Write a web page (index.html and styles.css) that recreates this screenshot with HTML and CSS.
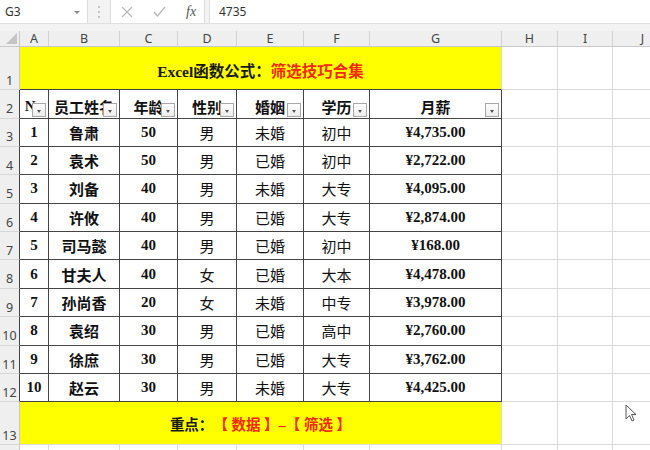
FILE: index.html
```html
<!DOCTYPE html>
<html>
<head>
  <title>Excel 筛选技巧</title>
  <link rel="stylesheet" href="styles.css">
</head>
<body>
  <div class="bar">
    <div class="namebox">G3<span class="caret"></span></div>
    <svg class="grip" width="4" height="14" viewBox="0 0 4 14">
      <circle cx="2" cy="2" r="1" fill="#b4b4b4"/>
      <circle cx="2" cy="7" r="1" fill="#b4b4b4"/>
      <circle cx="2" cy="12" r="1" fill="#b4b4b4"/>
    </svg>
    <div class="fxbox">
      <svg width="12" height="12" viewBox="0 0 12 12"><path d="M1 1 L11 11 M11 1 L1 11" stroke="#b8b8b8" stroke-width="1.2"/></svg>
      <svg width="13" height="11" viewBox="0 0 13 11"><path d="M1 6 L4.5 10 L12 1" stroke="#b8b8b8" stroke-width="1.3" fill="none"/></svg>
      <i>fx</i>
    </div>
    <div class="formula">4735</div>
  </div>

  <div class="sheet">
    <!-- column headers -->
    <div class="corner"><span></span></div>
    <div class="ch">A</div><div class="ch">B</div><div class="ch">C</div><div class="ch">D</div>
    <div class="ch">E</div><div class="ch">F</div><div class="ch">G</div><div class="ch">H</div>
    <div class="ch">I</div><div class="ch">J</div>

    <!-- row 1 -->
    <div class="rh">1</div>
    <div class="band top">Excel函数公式：<span class="red">筛选技巧合集</span></div>
    <div class="c"></div><div class="c"></div><div class="c"></div>

    <!-- row 2 -->
    <div class="rh dk">2</div>
    <div class="t hd">No<span class="dd"></span></div>
    <div class="t hd">员工姓名<span class="dd"></span></div>
    <div class="t hd">年龄<span class="dd"></span></div>
    <div class="t hd">性别<span class="dd"></span></div>
    <div class="t hd">婚姻<span class="dd"></span></div>
    <div class="t hd">学历<span class="dd"></span></div>
    <div class="t hd">月薪<span class="dd"></span></div>
    <div class="c"></div><div class="c"></div><div class="c"></div>

    <div class="rh dk">3</div>
    <div class="t n">1</div><div class="t b">鲁肃</div><div class="t n">50</div><div class="t">男</div><div class="t">未婚</div><div class="t">初中</div><div class="t n">¥4,735.00</div>
    <div class="c"></div><div class="c"></div><div class="c"></div>

    <div class="rh dk">4</div>
    <div class="t n">2</div><div class="t b">袁术</div><div class="t n">50</div><div class="t">男</div><div class="t">已婚</div><div class="t">初中</div><div class="t n">¥2,722.00</div>
    <div class="c"></div><div class="c"></div><div class="c"></div>

    <div class="rh dk">5</div>
    <div class="t n">3</div><div class="t b">刘备</div><div class="t n">40</div><div class="t">男</div><div class="t">未婚</div><div class="t">大专</div><div class="t n">¥4,095.00</div>
    <div class="c"></div><div class="c"></div><div class="c"></div>

    <div class="rh dk">6</div>
    <div class="t n">4</div><div class="t b">许攸</div><div class="t n">40</div><div class="t">男</div><div class="t">已婚</div><div class="t">大专</div><div class="t n">¥2,874.00</div>
    <div class="c"></div><div class="c"></div><div class="c"></div>

    <div class="rh dk">7</div>
    <div class="t n">5</div><div class="t b">司马懿</div><div class="t n">40</div><div class="t">男</div><div class="t">已婚</div><div class="t">初中</div><div class="t n">¥168.00</div>
    <div class="c"></div><div class="c"></div><div class="c"></div>

    <div class="rh dk">8</div>
    <div class="t n">6</div><div class="t b">甘夫人</div><div class="t n">40</div><div class="t">女</div><div class="t">已婚</div><div class="t">大本</div><div class="t n">¥4,478.00</div>
    <div class="c"></div><div class="c"></div><div class="c"></div>

    <div class="rh dk">9</div>
    <div class="t n">7</div><div class="t b">孙尚香</div><div class="t n">20</div><div class="t">女</div><div class="t">未婚</div><div class="t">中专</div><div class="t n">¥3,978.00</div>
    <div class="c"></div><div class="c"></div><div class="c"></div>

    <div class="rh dk">10</div>
    <div class="t n">8</div><div class="t b">袁绍</div><div class="t n">30</div><div class="t">男</div><div class="t">已婚</div><div class="t">高中</div><div class="t n">¥2,760.00</div>
    <div class="c"></div><div class="c"></div><div class="c"></div>

    <div class="rh dk">11</div>
    <div class="t n">9</div><div class="t b">徐庶</div><div class="t n">30</div><div class="t">男</div><div class="t">已婚</div><div class="t">大专</div><div class="t n">¥3,762.00</div>
    <div class="c"></div><div class="c"></div><div class="c"></div>

    <div class="rh dk">12</div>
    <div class="t n">10</div><div class="t b">赵云</div><div class="t n">30</div><div class="t">男</div><div class="t">未婚</div><div class="t">大专</div><div class="t n">¥4,425.00</div>
    <div class="c"></div><div class="c"></div><div class="c"></div>

    <!-- row 13 -->
    <div class="rh">13</div>
    <div class="band">重点：<span class="red">【 数据 】–【 筛选 】</span></div>
    <div class="c"></div><div class="c"></div><div class="c"></div>

    <!-- row 14, only its top edge shows -->
    <div class="rh"></div>
    <div class="c"></div><div class="c"></div><div class="c"></div><div class="c"></div><div class="c"></div>
    <div class="c"></div><div class="c"></div><div class="c"></div><div class="c"></div><div class="c"></div>
  </div>

  <svg class="cursor" width="12" height="19" viewBox="0 0 12 19">
    <path d="M1 1 L1 15 L4.5 11.5 L7 17 L9 16 L6.6 10.6 L11 10.6 Z" fill="#fff" stroke="#555" stroke-width="1" stroke-linejoin="round"/>
  </svg>
</body>
</html>
```

FILE: styles.css
```css
* {
  margin: 0;
  padding: 0;
  box-sizing: border-box;
}

body {
  width: 650px;
  height: 450px;
  overflow: hidden;
  background: #f3f3f3;
  font-family: "Noto Sans", "Noto Sans CJK SC", sans-serif;
  position: relative;
}

/* formula bar */
.bar {
  height: 24px;
  display: flex;
  align-items: stretch;
  border-bottom: 1px solid #e0e0e0;
}

.namebox {
  width: 88px;
  background: #fff;
  border-right: 1px solid #dcdcdc;
  font-size: 12px;
  color: #333;
  padding-left: 5px;
  display: flex;
  align-items: center;
  position: relative;
}

.caret {
  position: absolute;
  right: 7px;
  top: 11px;
  border-left: 3px solid transparent;
  border-right: 3px solid transparent;
  border-top: 3px solid #888;
}

.grip {
  margin: 5px 9px 0 9px;
}

.fxbox {
  width: 95px;
  background: #fff;
  border-left: 1px solid #dcdcdc;
  border-right: 1px solid #dcdcdc;
  display: flex;
  align-items: center;
  padding-left: 10px;
  gap: 20px;
}

.fxbox i {
  font-family: "Liberation Serif", serif;
  font-size: 14px;
  color: #555;
}

.formula {
  flex: 1;
  margin-left: 4px;
  background: #fff;
  border-left: 1px solid #dcdcdc;
  font-size: 12px;
  color: #333;
  padding-left: 9px;
  display: flex;
  align-items: center;
}

/* sheet grid */
.sheet {
  margin-top: 7px;
  display: grid;
  grid-template-columns: 20px 29px 71px 58px 59px 67px 66px 132px 56px 55px 60px;
  grid-template-rows: 16px 43px 28.5px repeat(10, 28.4px) 43px 20px;
}

.corner {
  background: #efefef;
  border-right: 1px solid #c8c8c8;
  border-bottom: 1px solid #c8c8c8;
  position: relative;
}

.corner span {
  position: absolute;
  right: 2px;
  bottom: 2px;
  border-left: 11px solid transparent;
  border-bottom: 11px solid #c4c4c4;
}

.ch {
  background: #efefef;
  border-right: 1px solid #d2d2d2;
  border-bottom: 1px solid #c8c8c8;
  font-size: 12.5px;
  color: #444;
  display: flex;
  align-items: center;
  justify-content: center;
}

.rh {
  background: #efefef;
  border-right: 1px solid #c8c8c8;
  border-bottom: 1px solid #d6d6d6;
  font-size: 12.5px;
  color: #444;
  display: flex;
  align-items: flex-end;
  justify-content: center;
  line-height: 1;
  padding-bottom: 2px;
}

.rh.dk {
  border-right-color: #444;
}

.c {
  background: #fff;
  border-right: 1px solid #dadada;
  border-bottom: 1px solid #dadada;
}

.band {
  grid-column: span 7;
  background: #ffff00;
  border-right: 1px solid #dadada;
  border-bottom: 1px solid #dadada;
  font-family: "Liberation Serif", "Noto Sans CJK SC", serif;
  font-weight: bold;
  font-size: 14.5px;
  color: #1a1a1a;
  display: flex;
  align-items: center;
  justify-content: center;
  padding-top: 1px;
}

.band.top {
  border-bottom-color: #444;
  font-size: 15.5px;
  padding-top: 3px;
}

.red {
  color: #f02a0a;
}

/* table cells */
.t {
  background: #fff;
  border-right: 1px solid #444;
  border-bottom: 1px solid #444;
  font-family: "Liberation Serif", "Noto Sans CJK SC", serif;
  font-size: 15px;
  color: #111;
  display: flex;
  align-items: center;
  justify-content: center;
  white-space: nowrap;
  overflow: hidden;
  position: relative;
}

.t.n,
.t.b,
.t.hd {
  font-weight: bold;
}

.t.hd {
  padding-top: 5px;
}

.dd {
  position: absolute;
  right: 2px;
  bottom: 1px;
  width: 14px;
  height: 14px;
  border: 1px solid #a8a8a8;
  background: linear-gradient(#ffffff, #ececec);
}

.dd::after {
  content: "";
  position: absolute;
  left: 4px;
  top: 6px;
  border-left: 2.5px solid transparent;
  border-right: 2.5px solid transparent;
  border-top: 3px solid #555;
}

.cursor {
  position: absolute;
  left: 625px;
  top: 404px;
}
```
